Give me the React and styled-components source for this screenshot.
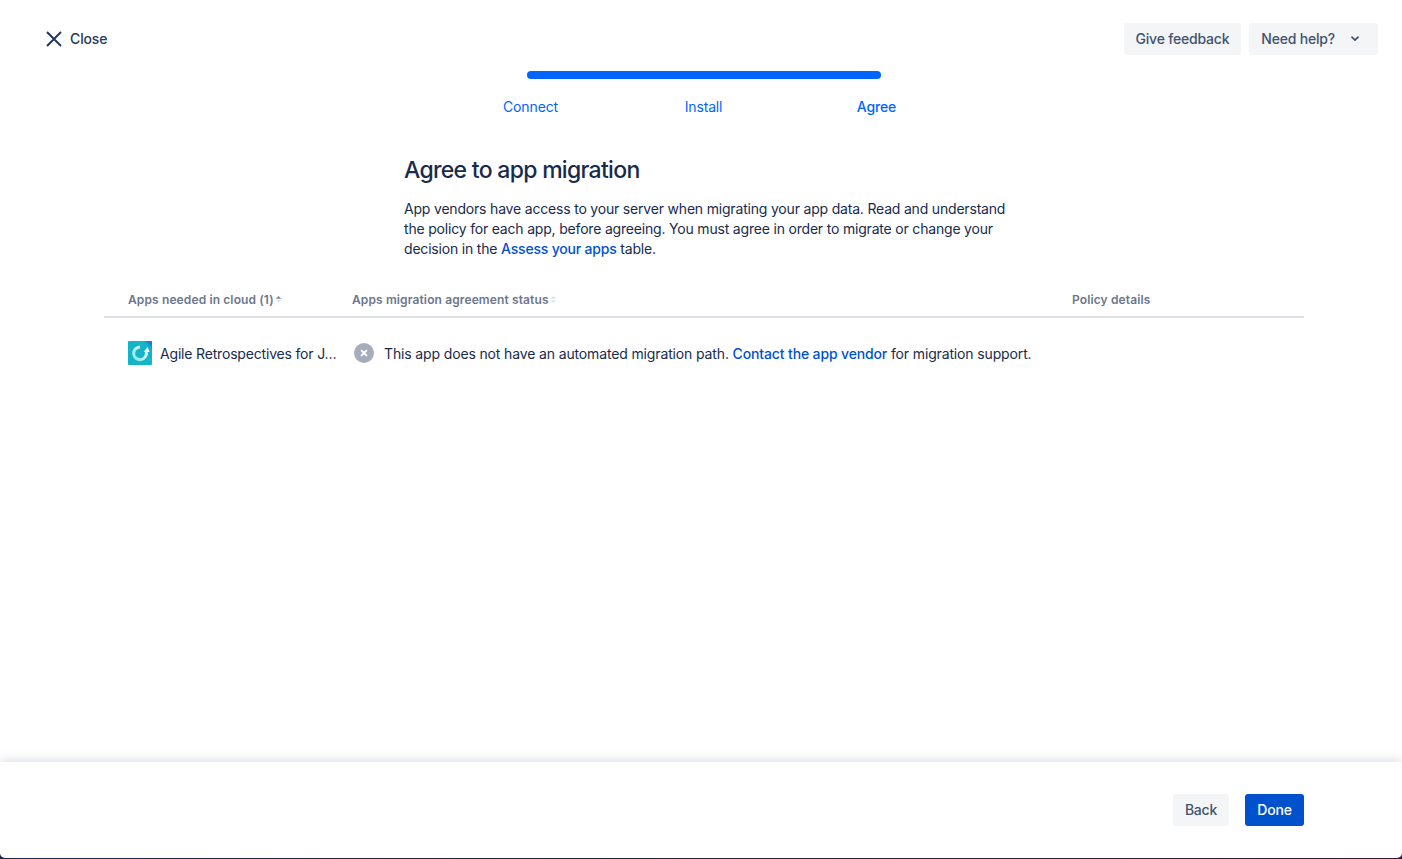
import React from "react";
import styled, { createGlobalStyle } from "styled-components";

const Global = createGlobalStyle`
  html, body { margin: 0; padding: 0; height: 100%; background: #fff; }
  body { font-family: Inter, "Liberation Sans", sans-serif; font-size: 14px; letter-spacing: -0.14px; color: #172B4D; overflow: hidden; }
  #root { height: 100%; }
  * { box-sizing: border-box; }
`;

const Page = styled.div`
  width: 1402px;
  height: 859px;
  display: flex;
  flex-direction: column;
  background: #fff;
`;

const Header = styled.header`
  display: flex;
  justify-content: space-between;
  align-items: center;
  padding: 23px 24px 0 46px;
  height: 55px;
  flex: none;
`;

const CloseButton = styled.div`
  display: flex;
  align-items: center;
  gap: 8px;
  padding-bottom: 1px;
  font-weight: 500;
  font-size: 14px;
  color: #253858;
`;

const HeaderActions = styled.div`
  display: flex;
  gap: 8px;
`;

const Button = styled.div`
  height: 32px;
  display: flex;
  align-items: center;
  justify-content: center;
  border-radius: 3px;
  font-size: 14px;
  font-weight: 500;
  letter-spacing: -0.2px;
  padding: 0 12px 1px;
  width: ${(p) => (p.$width ? `${p.$width}px` : "auto")};
  background: ${(p) => (p.$primary ? "#0052CC" : "#F4F5F7")};
  color: ${(p) => (p.$primary ? "#fff" : "#42526E")};
`;

const HelpButton = styled(Button)`
  gap: 15px;
  padding: 0 18px 1px 12px;
`;

const Progress = styled.section`
  flex: none;
  width: 519px;
  margin: 16px 0 0 444px;
  display: flex;
  flex-direction: column;
  align-items: center;
`;

const Bar = styled.div`
  width: 354px;
  height: 8px;
  border-radius: 4px;
  background: #0065FF;
`;

const Steps = styled.div`
  width: 100%;
  display: grid;
  grid-template-columns: repeat(3, 1fr);
  margin-top: 18px;
`;

const Step = styled.div`
  text-align: center;
  font-size: 14px;
  line-height: 20px;
  font-weight: ${(p) => (p.$active ? 500 : 400)};
  color: #0065FF;
`;

const Intro = styled.section`
  flex: none;
  width: 640px;
  margin: 39px 0 0 404px;
`;

const Title = styled.h1`
  margin: 0;
  font-size: 23px;
  line-height: 28px;
  font-weight: 500;
  letter-spacing: -0.7px;
  color: #172B4D;
`;

const Body = styled.p`
  margin: 15px 0 0;
  font-size: 14px;
  line-height: 20px;
  letter-spacing: -0.19px;
  color: #172B4D;
`;

const Link = styled.span`
  color: #0052CC;
  font-weight: 500;
`;

const Table = styled.section`
  flex: none;
  width: 1200px;
  margin: 30px 0 0 104px;
`;

const HeadRow = styled.div`
  display: grid;
  grid-template-columns: 224px 720px 1fr;
  height: 29px;
  padding-left: 24px;
  border-bottom: 2px solid #DFE1E6;
  align-content: start;
`;

const HeadCell = styled.div`
  display: flex;
  align-items: center;
  gap: 1px;
  height: 20px;
  font-size: 12px;
  font-weight: 600;
  letter-spacing: 0.12px;
  color: #6B778C;
`;

const BodyRow = styled.div`
  display: grid;
  grid-template-columns: 224px 1fr;
  padding: 23px 0 0 24px;
  align-items: center;
`;

const AppCell = styled.div`
  display: flex;
  align-items: center;
  gap: 8px;
  font-size: 14px;
  color: #172B4D;
`;

const AppName = styled.span`
  white-space: nowrap;
  letter-spacing: -0.18px;
`;

const StatusCell = styled.div`
  display: flex;
  align-items: center;
  gap: 10px;
  padding-left: 2px;
  height: 24px;
  font-size: 14px;
  white-space: nowrap;
`;

const Spacer = styled.div`
  flex: 1;
`;

const FooterEdge = styled.div`
  flex: none;
  height: 97px;
  background: linear-gradient(90deg, #1B2A4A 0%, #2A1F3D 60%, #34183E 100%);
`;

const Footer = styled.footer`
  height: 96px;
  background: #fff;
  border-radius: 0 0 5px 5px;
  box-shadow: 0 -1px 12px rgba(9, 30, 66, 0.17);
  display: flex;
  justify-content: flex-end;
  align-items: flex-start;
  gap: 16px;
  padding: 32px 98px 0 0;
`;

const SortIcon = ({ up }) => (
  <svg width="7" height="9" viewBox="0 0 7 9" aria-hidden="true">
    <path d="M3.5 1 L6.3 3.8 H0.7 Z" fill={up ? "#7A869A" : "#DFE1E6"} />
    <path d="M3.5 8 L6.3 5.2 H0.7 Z" fill="#DFE1E6" />
  </svg>
);

const CloseIcon = () => (
  <svg width="16" height="16" viewBox="0 0 16 16" aria-hidden="true">
    <path d="M1 1 L15 15 M15 1 L1 15" stroke="#253858" strokeWidth="2" fill="none" />
  </svg>
);

const Chevron = () => (
  <svg width="10" height="8" viewBox="0 0 10 8" aria-hidden="true">
    <path d="M2 2.2 L5 5.2 L8 2.2" stroke="#42526E" strokeWidth="1.7" fill="none" strokeLinecap="round" strokeLinejoin="round" />
  </svg>
);

const AppLogo = () => (
  <svg width="24" height="24" viewBox="0 0 24 24" aria-hidden="true">
    <defs>
      <linearGradient id="ring" x1="0" y1="1" x2="1" y2="0">
        <stop offset="0" stopColor="#8CE6E8" />
        <stop offset="0.6" stopColor="#C8F3F4" />
        <stop offset="1" stopColor="#ffffff" />
      </linearGradient>
      <linearGradient id="tile" x1="0" y1="1" x2="1" y2="0">
        <stop offset="0" stopColor="#12B5C6" />
        <stop offset="0.8" stopColor="#14B4C8" />
        <stop offset="1" stopColor="#1F5FD0" />
      </linearGradient>
    </defs>
    <rect width="24" height="24" rx="1" fill="url(#tile)" />
    <path d="M18.3 11 A6.4 6.4 0 1 1 12 5.9" stroke="url(#ring)" strokeWidth="3" fill="none" />
    <path d="M15.8 10.8 L21.6 11 L19.6 6 Z" fill="#fff" />
  </svg>
);

const ErrorIcon = () => (
  <svg width="20" height="20" viewBox="0 0 20 20" aria-hidden="true">
    <circle cx="10" cy="10" r="10" fill="#A5ADBA" />
    <path d="M7.6 7.6 L12.4 12.4 M12.4 7.6 L7.6 12.4" stroke="#fff" strokeWidth="2" strokeLinecap="round" />
  </svg>
);

export default function App() {
  return (
    <Page>
      <Global />
      <Header>
        <CloseButton>
          <CloseIcon />
          Close
        </CloseButton>
        <HeaderActions>
          <Button>Give feedback</Button>
          <HelpButton>
            Need help?
            <Chevron />
          </HelpButton>
        </HeaderActions>
      </Header>
      <Progress>
        <Bar />
        <Steps>
          <Step>Connect</Step>
          <Step>Install</Step>
          <Step $active>Agree</Step>
        </Steps>
      </Progress>
      <Intro>
        <Title>Agree to app migration</Title>
        <Body>
          App vendors have access to your server when migrating your app data. Read and understand
          <br />
          the policy for each app, before agreeing. You must agree in order to migrate or change your
          <br />
          decision in the <Link>Assess your apps</Link> table.
        </Body>
      </Intro>
      <Table>
        <HeadRow>
          <HeadCell>
            Apps needed in cloud (1) <SortIcon up />
          </HeadCell>
          <HeadCell>
            Apps migration agreement status <SortIcon />
          </HeadCell>
          <HeadCell>Policy details</HeadCell>
        </HeadRow>
        <BodyRow>
          <AppCell>
            <AppLogo />
            <AppName>Agile Retrospectives for J…</AppName>
          </AppCell>
          <StatusCell>
            <ErrorIcon />
            <span>
              This app does not have an automated migration path. <Link>Contact the app vendor</Link> for migration support.
            </span>
          </StatusCell>
        </BodyRow>
      </Table>
      <Spacer />
      <FooterEdge>
        <Footer>
          <Button $width={56}>Back</Button>
          <Button $primary $width={59}>Done</Button>
        </Footer>
      </FooterEdge>
    </Page>
  );
}
